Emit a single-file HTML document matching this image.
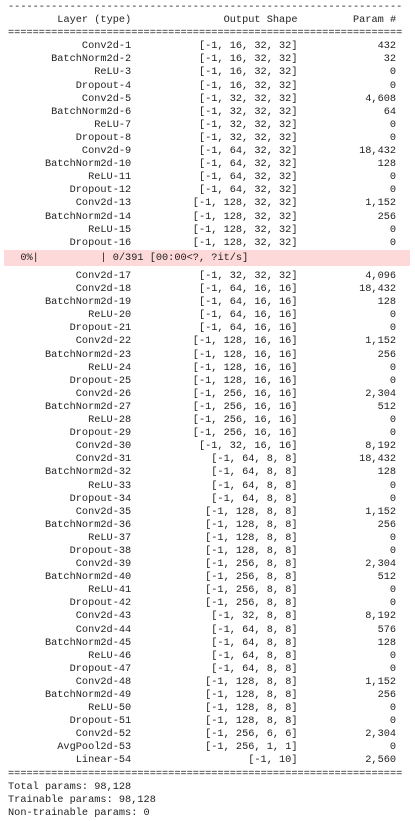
<!DOCTYPE html>
<html><head><meta charset="utf-8">
<style>
html,body{margin:0;padding:0;background:#fff;width:415px;height:821px;overflow:hidden}
body{font-family:"Liberation Mono",monospace;font-size:10.27px;color:#222;}
.wrap{position:absolute;left:8px;top:1px;}
.l{height:13.1px;line-height:13.1px;white-space:pre}
.r span{display:inline-block;text-align:right}
.a{width:20ch}.b{width:25ch;margin-left:2ch}.c{width:15ch;margin-left:1ch}
.pb{position:absolute;left:4px;width:406px;top:250px;height:16px;background:#fdd9d9;}
.pbt{position:absolute;left:8px;top:250px;line-height:16px;white-space:pre}
#bot{position:absolute;left:8px;top:270px;}
</style></head><body>
<div class="wrap"><div class="l">----------------------------------------------------------------</div><div class="l">        Layer (type)               Output Shape         Param #</div><div class="l">================================================================</div>
<div class="l r"><span class="a">Conv2d-1</span><span class="b">[-1, 16, 32, 32]</span><span class="c">432</span></div>
<div class="l r"><span class="a">BatchNorm2d-2</span><span class="b">[-1, 16, 32, 32]</span><span class="c">32</span></div>
<div class="l r"><span class="a">ReLU-3</span><span class="b">[-1, 16, 32, 32]</span><span class="c">0</span></div>
<div class="l r"><span class="a">Dropout-4</span><span class="b">[-1, 16, 32, 32]</span><span class="c">0</span></div>
<div class="l r"><span class="a">Conv2d-5</span><span class="b">[-1, 32, 32, 32]</span><span class="c">4,608</span></div>
<div class="l r"><span class="a">BatchNorm2d-6</span><span class="b">[-1, 32, 32, 32]</span><span class="c">64</span></div>
<div class="l r"><span class="a">ReLU-7</span><span class="b">[-1, 32, 32, 32]</span><span class="c">0</span></div>
<div class="l r"><span class="a">Dropout-8</span><span class="b">[-1, 32, 32, 32]</span><span class="c">0</span></div>
<div class="l r"><span class="a">Conv2d-9</span><span class="b">[-1, 64, 32, 32]</span><span class="c">18,432</span></div>
<div class="l r"><span class="a">BatchNorm2d-10</span><span class="b">[-1, 64, 32, 32]</span><span class="c">128</span></div>
<div class="l r"><span class="a">ReLU-11</span><span class="b">[-1, 64, 32, 32]</span><span class="c">0</span></div>
<div class="l r"><span class="a">Dropout-12</span><span class="b">[-1, 64, 32, 32]</span><span class="c">0</span></div>
<div class="l r"><span class="a">Conv2d-13</span><span class="b">[-1, 128, 32, 32]</span><span class="c">1,152</span></div>
<div class="l r"><span class="a">BatchNorm2d-14</span><span class="b">[-1, 128, 32, 32]</span><span class="c">256</span></div>
<div class="l r"><span class="a">ReLU-15</span><span class="b">[-1, 128, 32, 32]</span><span class="c">0</span></div>
<div class="l r"><span class="a">Dropout-16</span><span class="b">[-1, 128, 32, 32]</span><span class="c">0</span></div>
</div>
<div class="pb"></div>
<div class="pbt">  0%|          | 0/391 [00:00&lt;?, ?it/s]</div>
<div id="bot">
<div class="l r"><span class="a">Conv2d-17</span><span class="b">[-1, 32, 32, 32]</span><span class="c">4,096</span></div>
<div class="l r"><span class="a">Conv2d-18</span><span class="b">[-1, 64, 16, 16]</span><span class="c">18,432</span></div>
<div class="l r"><span class="a">BatchNorm2d-19</span><span class="b">[-1, 64, 16, 16]</span><span class="c">128</span></div>
<div class="l r"><span class="a">ReLU-20</span><span class="b">[-1, 64, 16, 16]</span><span class="c">0</span></div>
<div class="l r"><span class="a">Dropout-21</span><span class="b">[-1, 64, 16, 16]</span><span class="c">0</span></div>
<div class="l r"><span class="a">Conv2d-22</span><span class="b">[-1, 128, 16, 16]</span><span class="c">1,152</span></div>
<div class="l r"><span class="a">BatchNorm2d-23</span><span class="b">[-1, 128, 16, 16]</span><span class="c">256</span></div>
<div class="l r"><span class="a">ReLU-24</span><span class="b">[-1, 128, 16, 16]</span><span class="c">0</span></div>
<div class="l r"><span class="a">Dropout-25</span><span class="b">[-1, 128, 16, 16]</span><span class="c">0</span></div>
<div class="l r"><span class="a">Conv2d-26</span><span class="b">[-1, 256, 16, 16]</span><span class="c">2,304</span></div>
<div class="l r"><span class="a">BatchNorm2d-27</span><span class="b">[-1, 256, 16, 16]</span><span class="c">512</span></div>
<div class="l r"><span class="a">ReLU-28</span><span class="b">[-1, 256, 16, 16]</span><span class="c">0</span></div>
<div class="l r"><span class="a">Dropout-29</span><span class="b">[-1, 256, 16, 16]</span><span class="c">0</span></div>
<div class="l r"><span class="a">Conv2d-30</span><span class="b">[-1, 32, 16, 16]</span><span class="c">8,192</span></div>
<div class="l r"><span class="a">Conv2d-31</span><span class="b">[-1, 64, 8, 8]</span><span class="c">18,432</span></div>
<div class="l r"><span class="a">BatchNorm2d-32</span><span class="b">[-1, 64, 8, 8]</span><span class="c">128</span></div>
<div class="l r"><span class="a">ReLU-33</span><span class="b">[-1, 64, 8, 8]</span><span class="c">0</span></div>
<div class="l r"><span class="a">Dropout-34</span><span class="b">[-1, 64, 8, 8]</span><span class="c">0</span></div>
<div class="l r"><span class="a">Conv2d-35</span><span class="b">[-1, 128, 8, 8]</span><span class="c">1,152</span></div>
<div class="l r"><span class="a">BatchNorm2d-36</span><span class="b">[-1, 128, 8, 8]</span><span class="c">256</span></div>
<div class="l r"><span class="a">ReLU-37</span><span class="b">[-1, 128, 8, 8]</span><span class="c">0</span></div>
<div class="l r"><span class="a">Dropout-38</span><span class="b">[-1, 128, 8, 8]</span><span class="c">0</span></div>
<div class="l r"><span class="a">Conv2d-39</span><span class="b">[-1, 256, 8, 8]</span><span class="c">2,304</span></div>
<div class="l r"><span class="a">BatchNorm2d-40</span><span class="b">[-1, 256, 8, 8]</span><span class="c">512</span></div>
<div class="l r"><span class="a">ReLU-41</span><span class="b">[-1, 256, 8, 8]</span><span class="c">0</span></div>
<div class="l r"><span class="a">Dropout-42</span><span class="b">[-1, 256, 8, 8]</span><span class="c">0</span></div>
<div class="l r"><span class="a">Conv2d-43</span><span class="b">[-1, 32, 8, 8]</span><span class="c">8,192</span></div>
<div class="l r"><span class="a">Conv2d-44</span><span class="b">[-1, 64, 8, 8]</span><span class="c">576</span></div>
<div class="l r"><span class="a">BatchNorm2d-45</span><span class="b">[-1, 64, 8, 8]</span><span class="c">128</span></div>
<div class="l r"><span class="a">ReLU-46</span><span class="b">[-1, 64, 8, 8]</span><span class="c">0</span></div>
<div class="l r"><span class="a">Dropout-47</span><span class="b">[-1, 64, 8, 8]</span><span class="c">0</span></div>
<div class="l r"><span class="a">Conv2d-48</span><span class="b">[-1, 128, 8, 8]</span><span class="c">1,152</span></div>
<div class="l r"><span class="a">BatchNorm2d-49</span><span class="b">[-1, 128, 8, 8]</span><span class="c">256</span></div>
<div class="l r"><span class="a">ReLU-50</span><span class="b">[-1, 128, 8, 8]</span><span class="c">0</span></div>
<div class="l r"><span class="a">Dropout-51</span><span class="b">[-1, 128, 8, 8]</span><span class="c">0</span></div>
<div class="l r"><span class="a">Conv2d-52</span><span class="b">[-1, 256, 6, 6]</span><span class="c">2,304</span></div>
<div class="l r"><span class="a">AvgPool2d-53</span><span class="b">[-1, 256, 1, 1]</span><span class="c">0</span></div>
<div class="l r"><span class="a">Linear-54</span><span class="b">[-1, 10]</span><span class="c">2,560</span></div>
<div class="l">================================================================</div>
<div class="l">Total params: 98,128</div>
<div class="l">Trainable params: 98,128</div>
<div class="l">Non-trainable params: 0</div>
</div>
</body></html>
